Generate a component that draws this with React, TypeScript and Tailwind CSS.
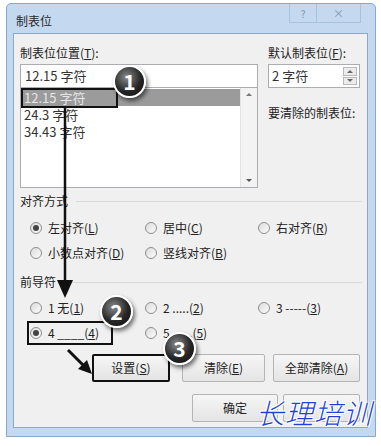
import React, { ReactNode } from "react";

const Acc = ({ k }: { k: string }) => (
  <>
    (<span className="underline">{k}</span>)
  </>
);

const Radio = ({ checked, children }: { checked?: boolean; children: ReactNode }) => (
  <div className="flex items-center gap-[6px] h-[25px]">
    <span className="w-[12px] h-[12px] rounded-full border border-[#8e8e8e] bg-gradient-to-br from-[#dcdcdc] to-[#fbfbfb] flex items-center justify-center">
      {checked && <span className="w-[6px] h-[6px] rounded-full bg-[#444]" />}
    </span>
    <span>{children}</span>
  </div>
);

const Button = ({ children, className }: { children?: ReactNode; className: string }) => (
  <div
    className={`h-[28px] flex items-center justify-center rounded-[2px] bg-gradient-to-b from-[#f6f6f6] to-[#e4e4e4] ${className}`}
  >
    {children}
  </div>
);

const Callout = ({ n, className }: { n: string; className: string }) => (
  <div
    className={`absolute w-[33px] h-[33px] rounded-full border-2 border-white bg-[radial-gradient(circle_at_40%_35%,#8a8a8a,#262626_55%,#0c0c0c)] shadow-[2px_3px_4px_rgba(0,0,0,0.55)] flex items-center justify-center text-white font-bold text-[21px] leading-none ${className}`}
  >
    {n}
  </div>
);

const Heading = ({ children, className }: { children: ReactNode; className: string }) => (
  <div className={`flex items-center h-[14px] ${className}`}>
    <span className="leading-[14px]">{children}</span>
    <span className="flex-1 h-px bg-[#d8d8d8] ml-[8px] mr-[5px]" />
  </div>
);

export default function App() {
  return (
    <div className="relative w-[381px] h-[446px] bg-white pt-[3px] pl-[6px] overflow-hidden font-['Noto_Sans_CJK_SC',sans-serif] text-[12px] text-[#222]">
      {/* dialog frame */}
      <div className="w-[370px] h-[434px] border border-[#86a8cf] bg-[#c4d9ef] rounded-t-[5px] flex flex-col">
        {/* title bar */}
        <div className="h-[29px] flex items-start">
          <span className="ml-[9px] mt-[10px] leading-[14px] text-[#2a2a2a]">制表位</span>
          <div className="ml-auto mr-[14px] flex">
            <div className="w-[28px] h-[19px] border border-[#a9c1dc] border-t-0 flex items-center justify-center text-[10px] text-[#7d93ad]">
              ?
            </div>
            <div className="w-[44px] h-[19px] border border-[#a9c1dc] border-t-0 border-l-0 flex items-center justify-center text-[11px] text-[#7d93ad]">
              ×
            </div>
          </div>
        </div>

        {/* client area */}
        <div className="ml-[6px] mr-[7px] h-[395px] border border-[#8ea7c4] bg-[#f0f0f0] pl-[6px] flex flex-col">
          {/* top section */}
          <div className="flex pt-[12px]">
            <div className="w-[238px]">
              <div className="h-[14px] leading-[14px]">
                制表位位置<Acc k="T" />:
              </div>
              <div className="mt-[4px] h-[24px] border border-[#abadb3] bg-white flex items-center pl-[4px] text-[13px] text-[#333]">
                12.15 字符
              </div>
              <div className="h-[100px] border border-t-0 border-[#abadb3] bg-white flex">
                <div className="flex-1 pt-[1px] pl-[1px] text-[13px] text-[#333]">
                  <div className="h-[17px] bg-[#9b9b9b] text-[#e6e6e6] pl-[2px] leading-[17px]">12.15 字符</div>
                  <div className="h-[17px] pl-[2px] leading-[17px]">24.3 字符</div>
                  <div className="h-[17px] pl-[2px] leading-[17px]">34.43 字符</div>
                </div>
                <div className="w-[17px] bg-[#f3f3f3] border-l border-[#e2e2e2] flex flex-col justify-between items-center py-[5px]">
                  <span className="w-0 h-0 border-l-[3px] border-r-[3px] border-b-[3px] border-l-transparent border-r-transparent border-b-[#777]" />
                  <span className="w-0 h-0 border-l-[3px] border-r-[3px] border-t-[3px] border-l-transparent border-r-transparent border-t-[#555]" />
                </div>
              </div>
            </div>
            <div className="ml-[10px] w-[92px]">
              <div className="h-[14px] leading-[14px]">
                默认制表位<Acc k="F" />:
              </div>
              <div className="mt-[4px] h-[24px] border border-[#abadb3] bg-white flex items-center pl-[3px] text-[13px] text-[#333]">
                <span className="flex-1">2 字符</span>
                <div className="mr-[2px] w-[14px] h-[18px] flex flex-col gap-px">
                  <div className="flex-1 border border-[#b8b8b8] bg-[#ececec] flex items-center justify-center">
                    <span className="w-0 h-0 border-l-[3px] border-r-[3px] border-b-[3px] border-l-transparent border-r-transparent border-b-[#666]" />
                  </div>
                  <div className="flex-1 border border-[#b8b8b8] bg-[#ececec] flex items-center justify-center">
                    <span className="w-0 h-0 border-l-[3px] border-r-[3px] border-t-[3px] border-l-transparent border-r-transparent border-t-[#666]" />
                  </div>
                </div>
              </div>
              <div className="mt-[18px] h-[14px] leading-[14px] whitespace-nowrap">要清除的制表位:</div>
            </div>
          </div>

          {/* alignment */}
          <Heading className="mt-[6px]">对齐方式</Heading>
          <div className="mt-[7px] pl-[10px] grid grid-cols-[115px_113px_1fr]">
            <Radio checked>
              左对齐<Acc k="L" />
            </Radio>
            <Radio>
              居中<Acc k="C" />
            </Radio>
            <Radio>
              右对齐<Acc k="R" />
            </Radio>
            <Radio>
              小数点对齐<Acc k="D" />
            </Radio>
            <Radio>
              竖线对齐<Acc k="B" />
            </Radio>
          </div>

          {/* leader */}
          <Heading className="mt-[10px]">前导符</Heading>
          <div className="mt-[6px] pl-[10px] grid grid-cols-[115px_113px_1fr]">
            <Radio>
              1 无<Acc k="1" />
            </Radio>
            <Radio>
              2 .....<Acc k="2" />
            </Radio>
            <Radio>
              3 -----<Acc k="3" />
            </Radio>
            <Radio checked>
              4 ____<Acc k="4" />
            </Radio>
            <Radio>
              5 ......<Acc k="5" />
            </Radio>
          </div>

          {/* buttons */}
          <div className="mt-[9px] flex">
            <Button className="ml-[72px] w-[78px] border-2 border-[#111]">
              设置<Acc k="S" />
            </Button>
            <Button className="ml-[12px] w-[83px] border border-[#b4b4b4]">
              清除<Acc k="E" />
            </Button>
            <Button className="ml-[8px] w-[87px] border border-[#b4b4b4]">
              全部清除<Acc k="A" />
            </Button>
          </div>
          <div className="mt-[12px] flex">
            <Button className="ml-[172px] w-[86px] border border-[#b4b4b4]">确定</Button>
            <Button className="ml-[5px] w-[77px] border border-[#b4b4b4]" />
          </div>
        </div>
      </div>

      {/* annotations */}
      <div className="absolute left-[21px] top-[88px] w-[97px] h-[20px] border-2 border-[#111]" />
      <div className="absolute left-[27px] top-[321px] w-[86px] h-[24px] border-2 border-[#111]" />
      <svg className="absolute left-0 top-0 pointer-events-none" width="381" height="446">
        <line x1="65" y1="108" x2="65" y2="284" stroke="#111" strokeWidth="2.5" />
        <polygon points="57,280 73,280 65,298" fill="#111" />
        <line x1="68" y1="350" x2="84" y2="366" stroke="#111" strokeWidth="3" />
        <polygon points="78,369 87,360 92,374" fill="#111" />
      </svg>
      <Callout n="1" className="left-[113px] top-[65px]" />
      <Callout n="2" className="left-[100px] top-[295px]" />
      <Callout n="3" className="left-[163px] top-[332px]" />

      {/* watermark */}
      <div className="absolute left-[256px] top-[392px] text-[28px] leading-[40px] tracking-[1px] text-[#1f3fdc] font-light italic [text-shadow:1px_1px_0_#fff,-1px_-1px_0_#fff,1px_-1px_0_#fff,-1px_1px_0_#fff]">
        长理培训
      </div>
    </div>
  );
}
